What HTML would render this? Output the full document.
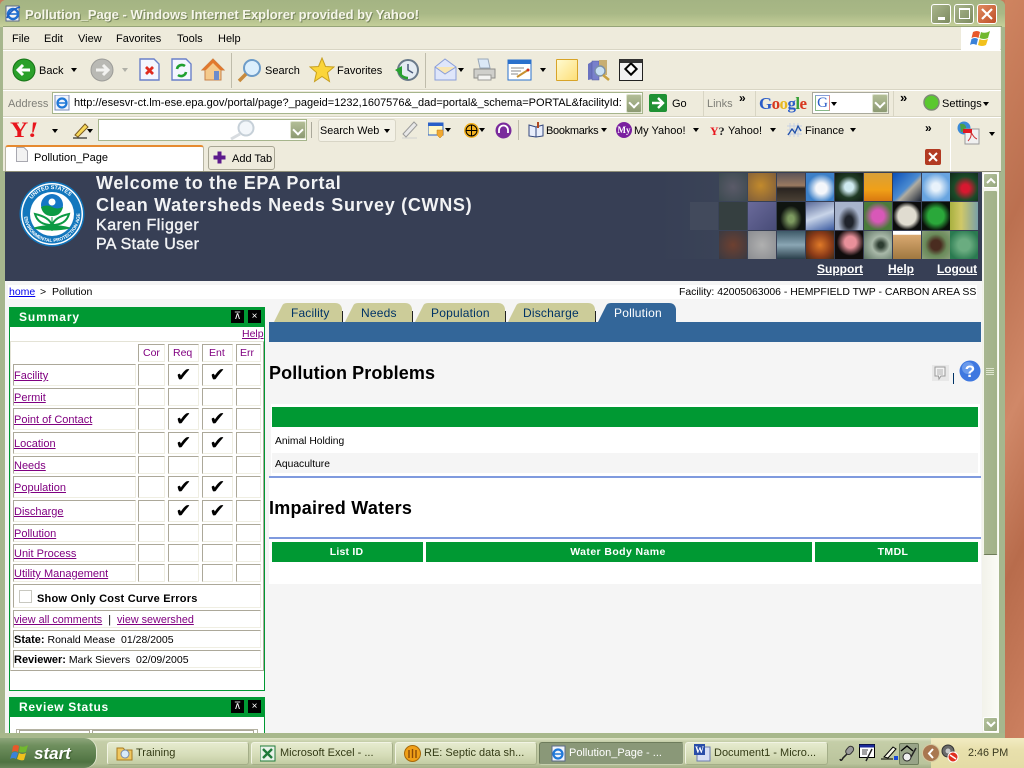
<!DOCTYPE html>
<html lang="en"><head><meta charset="utf-8"><title>Pollution_Page</title>
<style>
*{box-sizing:border-box}
html,body{margin:0;padding:0;width:1024px;height:768px;overflow:hidden;background:#c67c5a;font-family:"Liberation Sans",sans-serif;font-size:11px;color:#000}
div,span.t,svg.a{position:absolute}
.t{position:absolute;white-space:nowrap;line-height:15px;font-size:11px}
.dd{position:absolute;width:0;height:0;border-left:3.5px solid transparent;border-right:3.5px solid transparent;border-top:4px solid #000}
.w{color:#fff}
.lk{color:#800080;text-decoration:underline}
.r{position:absolute;left:13px;width:249px}
.r i{position:absolute;top:0;bottom:0;display:block;font-style:normal;background:#fff;border:1px solid;border-color:#aca899 #efeee2 #efeee2 #aca899;font-size:11px;line-height:19px;padding-left:0;white-space:nowrap;overflow:visible}
.r .a{left:0;width:123px}.r .b{left:125px;width:27px}.r .c{left:155px;width:31px}.r .d{left:189px;width:31px}.r .e{left:223px;width:25px}
.r a{color:#800080;text-decoration:underline}
.r i.ck{font-family:"DejaVu Sans",sans-serif;font-size:19px;line-height:21px;text-align:center;padding:0}
.bx{position:absolute;top:3px;width:13px;height:13px;background:#000;color:#fff;font-size:10px;line-height:13px;text-align:center}
.ph{position:absolute;width:28px;height:28px}
.ddb{position:absolute;background:linear-gradient(#b2bd96,#8d9a73);border:1px solid #dfe4cf;border-radius:2px}
.ddb:after{content:"";position:absolute;left:3px;top:4px;width:6px;height:6px;border:solid #fff;border-width:0 2px 2px 0;transform:rotate(45deg)}
.tb{position:absolute;top:742px;height:23px;background:linear-gradient(#e6ebcf,#d5dcb7 60%,#c3cca3);border:1px solid #f2f4e4;border-right-color:#a4ae88;border-bottom-color:#a4ae88;border-radius:3px;font-size:11px;line-height:21px;color:#333a14;white-space:nowrap}
.tb span{position:absolute;top:0}
.wb{position:absolute;top:4px;width:20px;height:20px;border:1px solid #fff;border-radius:3px}
</style></head><body>

<!-- desktop texture -->
<div style="left:1005px;top:0;width:19px;height:738px;background:linear-gradient(115deg,#cf8460,#bb7050 30%,#d08868 55%,#b86c4c 75%,#cc8060)"></div>

<!-- window frame -->
<div style="left:0;top:0;width:1005px;height:738px;background:#a6b68d;border-radius:6px 6px 0 0"></div>
<div style="left:0;top:0;width:1005px;height:27px;background:linear-gradient(#a4b483,#a9b886 50%,#c6d09a);border-radius:6px 6px 0 0"></div>
<div style="left:3px;top:26px;width:999px;height:1px;background:#95a478"></div>
<svg class="a" style="left:5px;top:5px" width="17" height="17" viewBox="0 0 17 17"><rect x="1" y="1" width="13" height="15" fill="#f4f4f4" stroke="#5a6a88"/><circle cx="8" cy="9" r="5" fill="none" stroke="#1f6fd0" stroke-width="2.4"/><path d="M4 9h8" stroke="#1f6fd0" stroke-width="1.6"/><path d="M2 13C5 6 11 3 15 2" stroke="#1c5cc0" stroke-width="1.6" fill="none"/></svg>
<span class="t" style="left:25px;top:7px;font-size:13px;font-weight:bold;color:#f6f6ea;text-shadow:1px 1px 0 #77855c">Pollution_Page - Windows Internet Explorer provided by Yahoo!</span>
<div class="wb" style="left:931px;background:linear-gradient(135deg,#a9b58c,#7d8b60)"><div style="left:6px;top:12px;width:7px;height:3px;background:#fff"></div></div>
<div class="wb" style="left:954px;background:linear-gradient(135deg,#a9b58c,#7d8b60)"><div style="left:4px;top:3px;width:11px;height:11px;border:1px solid #fff;border-top-width:2px"></div></div>
<div class="wb" style="left:977px;background:linear-gradient(135deg,#e08a60,#bf4f28)"><svg class="a" style="left:3px;top:3px" width="12" height="12"><path d="M1 1 11 11M11 1 1 11" stroke="#fff" stroke-width="2.2"/></svg></div>

<!-- chrome bg -->
<div style="left:3px;top:27px;width:998px;height:144px;background:#eeebdc"></div>
<div style="left:3px;top:49px;width:998px;height:1px;background:#d8d5c4"></div>
<div style="left:3px;top:50px;width:998px;height:1px;background:#fff"></div>
<div style="left:3px;top:89px;width:998px;height:1px;background:#d8d5c4"></div>
<div style="left:3px;top:90px;width:998px;height:1px;background:#fff"></div>
<div style="left:3px;top:116px;width:998px;height:1px;background:#d8d5c4"></div>
<div style="left:3px;top:117px;width:998px;height:1px;background:#fff"></div>

<!-- menu -->
<span class="t" style="left:12px;top:32px">File</span>
<span class="t" style="left:44px;top:32px">Edit</span>
<span class="t" style="left:78px;top:32px">View</span>
<span class="t" style="left:116px;top:32px">Favorites</span>
<span class="t" style="left:177px;top:32px">Tools</span>
<span class="t" style="left:218px;top:32px">Help</span>
<div style="left:961px;top:27px;width:39px;height:23px;background:#fff"></div>
<svg class="a" style="left:970px;top:28px" width="22" height="20" viewBox="0 0 22 20"><path d="M3 4Q7 2 10 4L8.500 10Q5 8 1.500 10Z" fill="#e8582a"/><path d="M11 4Q15 6 20 3L18 10Q14 12 9.500 10Z" fill="#72b82e"/><path d="M1.500 11Q5 9 8 11L6.500 17Q3 15 0 17Z" fill="#3b82d8"/><path d="M9.500 11Q13 13 18 11L16 17Q12 19 8 17Z" fill="#f2c11c"/></svg>

<!-- main toolbar -->
<svg class="a" style="left:12px;top:58px" width="24" height="24"><circle cx="12" cy="12" r="11" fill="#2ba02b" stroke="#157315"/><path d="M6 12h12M11 7l-5 5 5 5" fill="none" stroke="#fff" stroke-width="3"/></svg>
<span class="t" style="left:39px;top:64px">Back</span>
<div class="dd" style="left:71px;top:68px"></div>
<svg class="a" style="left:90px;top:58px" width="24" height="24"><circle cx="12" cy="12" r="11" fill="#b9b9b4" stroke="#9c9c98"/><path d="M6 12h12M13 7l5 5-5 5" fill="none" stroke="#f2f2f0" stroke-width="3"/></svg>
<div class="dd" style="left:122px;top:68px;border-top-color:#b0b0a8"></div>
<svg class="a" style="left:139px;top:58px" width="22" height="24"><path d="M1 1H15L20 6V22H1Z" fill="#f4f6ff" stroke="#6a80c8" stroke-width="1.400"/><path d="M7 9l7 7M14 9l-7 7" stroke="#e02c20" stroke-width="2.800"/></svg>
<svg class="a" style="left:171px;top:58px" width="22" height="24"><path d="M1 1H15L20 6V22H1Z" fill="#f4f6ff" stroke="#6a80c8" stroke-width="1.400"/><path d="M6 11a5 5 0 0 1 8-3M15 14a5 5 0 0 1-8 3" fill="none" stroke="#20a030" stroke-width="2.600"/></svg>
<svg class="a" style="left:201px;top:57px" width="24" height="25"><path d="M12 2 23 13H20V23H4V13H1Z" fill="#f4ca8c" stroke="#c8824a"/><path d="M12 2 23 13H19L12 6 5 13H1Z" fill="#e2782c"/><rect x="13" y="14" width="5" height="9" fill="#6b8ccc"/></svg>
<div style="left:231px;top:53px;width:1px;height:35px;background:#bfbcab"></div>
<svg class="a" style="left:237px;top:58px" width="26" height="25"><circle cx="15" cy="10" r="8" fill="#dceffc" stroke="#6d9cc8" stroke-width="2"/><path d="M9 16 2 23" stroke="#c88a3c" stroke-width="3.500"/></svg>
<span class="t" style="left:265px;top:64px">Search</span>
<svg class="a" style="left:309px;top:57px" width="26" height="26"><path d="M13 1 16.500 9.500 25 10 18.500 15.500 20.500 24.500 13 19.500 5.500 24.500 7.500 15.500 1 10 9.500 9.500Z" fill="#fbd53a" stroke="#c8a020"/></svg>
<span class="t" style="left:337px;top:64px">Favorites</span>
<svg class="a" style="left:394px;top:58px" width="26" height="24"><circle cx="14" cy="12" r="10" fill="#e4ecf2" stroke="#6a7a8a" stroke-width="2"/><path d="M14 6v6l5 3" stroke="#4a5a7a" fill="none" stroke-width="1.500"/><path d="M1 12 8 8V17Z" fill="#28a030"/><path d="M5 13a9 8 0 0 0 9 7" stroke="#28a030" stroke-width="2.500" fill="none"/></svg>
<div style="left:425px;top:53px;width:1px;height:35px;background:#bfbcab"></div>
<svg class="a" style="left:434px;top:58px" width="24" height="24"><path d="M1 9 11 1 22 9V22H1Z" fill="#dfe6fa" stroke="#8a9ed8"/><path d="M1 9 11 16 22 9" fill="#f8e6b4" stroke="#8a9ed8"/></svg>
<div class="dd" style="left:458px;top:68px"></div>
<svg class="a" style="left:472px;top:58px" width="25" height="24"><path d="M6 1h10l2 9H8Z" fill="#dbe8f6" stroke="#9aa8b8"/><path d="M2 11H23V20H2Z" fill="#cfcfcb" stroke="#8e8e8a"/><rect x="6" y="17" width="13" height="5" fill="#f4f4f2" stroke="#9a9a96"/></svg>
<svg class="a" style="left:507px;top:59px" width="26" height="22"><rect x="1" y="1" width="23" height="20" fill="#fff" stroke="#2a70cc"/><rect x="1" y="1" width="23" height="4" fill="#2a70cc"/><path d="M4 9h13M4 12h10M4 15h7" stroke="#8a8a8a"/><path d="M10 18 21 11" stroke="#c89030" stroke-width="2"/><circle cx="21" cy="11" r="1.500" fill="#d03020"/></svg>
<div class="dd" style="left:540px;top:68px"></div>
<div style="left:556px;top:59px;width:22px;height:22px;background:linear-gradient(135deg,#fffad0,#fddf78);border:1px solid #d8a428;border-radius:1px"></div>
<svg class="a" style="left:587px;top:59px" width="24" height="22"><path d="M1 5 6 2V20L1 21Z" fill="#6a72c0"/><rect x="5" y="2" width="7" height="19" fill="#7880cc" stroke="#50589a" stroke-width=".5"/><rect x="12" y="1" width="8" height="15" fill="#c8ae72"/><circle cx="13" cy="12" r="5" fill="#c8e0f4" stroke="#7a90a8" stroke-width="1.400"/><path d="M16 16l6 5" stroke="#c8a040" stroke-width="2.500"/></svg>
<div style="left:619px;top:59px;width:24px;height:22px;background:#f1f1f1;border:1px solid #222;border-top:4px solid #333"></div>
<div style="left:626px;top:64px;width:10px;height:10px;border:2px solid #000;background:#fff;transform:rotate(45deg)"></div>

<!-- address row -->
<span class="t" style="left:8px;top:97px;color:#7f7f78">Address</span>
<div style="left:52px;top:92px;width:591px;height:22px;background:#fff;border:1px solid #a6b58c"></div>
<svg class="a" style="left:54px;top:95px" width="17" height="16"><rect x="1" y="0" width="14" height="15" fill="#f0f4fc" stroke="#7a8cb8"/><circle cx="8" cy="8" r="4.500" fill="none" stroke="#1f78d8" stroke-width="2.200"/><path d="M4 8h8" stroke="#1f78d8" stroke-width="1.500"/></svg>
<div style="left:74px;top:96px;width:552px;height:16px;overflow:hidden"><span class="t" style="left:0;top:0;font-size:11px">http://esesvr-ct.lm-ese.epa.gov/portal/page?_pageid=1232,1607576&amp;_dad=portal&amp;_schema=PORTAL&amp;facilityId:</span></div>
<div class="ddb" style="left:626px;top:94px;width:16px;height:19px"></div>
<svg class="a" style="left:649px;top:94px" width="19" height="18"><rect width="18" height="18" rx="2" fill="#1f9134"/><path d="M3 9h11M9 4l5 5-5 5" stroke="#fff" stroke-width="2.400" fill="none"/></svg>
<span class="t" style="left:672px;top:97px">Go</span>
<div style="left:703px;top:91px;width:1px;height:25px;background:#d8d5c4"></div>
<span class="t" style="left:707px;top:97px;color:#7f7f78">Links</span>
<span class="t" style="left:739px;top:91px;font-weight:bold;font-size:12px">&#187;</span>
<div style="left:755px;top:91px;width:1px;height:25px;background:#d8d5c4"></div>
<span class="t" style="left:759px;top:95px;font-family:'Liberation Serif',serif;font-size:17px;line-height:18px;letter-spacing:-.6px;font-weight:bold;color:#2a5cc8">G<span style="color:#d83820">o</span><span style="color:#e8b820">o</span><span style="color:#2a5cc8">g</span><span style="color:#38a038">l</span><span style="color:#d83820">e</span></span>
<div style="left:812px;top:92px;width:77px;height:22px;background:#fff;border:1px solid #a9a99c"></div>
<div style="left:815px;top:95px;width:15px;height:16px;border:1px solid #88b888;border-right-color:#e08888;border-top-color:#88a0d8;font-family:'Liberation Serif',serif;color:#2a5cc8;font-size:15px;line-height:15px;text-align:center">G</div>
<div class="dd" style="left:831px;top:102px"></div>
<div class="ddb" style="left:872px;top:94px;width:16px;height:19px"></div>
<span class="t" style="left:900px;top:90px;font-weight:bold;font-size:13px">&#187;</span>
<svg class="a" style="left:923px;top:94px" width="17" height="17"><circle cx="8.500" cy="8.500" r="7.500" fill="#5ac82e" stroke="#7d8a74" stroke-width="1.500"/></svg>
<span class="t" style="left:942px;top:97px">Settings</span>
<div class="dd" style="left:983px;top:102px"></div>
<div style="left:893px;top:91px;width:1px;height:25px;background:#d8d5c4"></div>

<!-- yahoo row -->
<span class="t" style="left:10px;top:119px;font-family:'Liberation Serif',serif;font-size:22px;line-height:21px;font-weight:bold;color:#e8141c;transform:scaleX(1.15);transform-origin:left top">Y<i>!</i></span>
<div class="dd" style="left:52px;top:129px"></div>
<svg class="a" style="left:72px;top:121px" width="18" height="18"><path d="M3 14 13 3l3 3L6 16Z" fill="#f8d858" stroke="#7a5a20"/><path d="M1 17h14" stroke="#000"/></svg>
<div class="dd" style="left:87px;top:129px"></div>
<div style="left:98px;top:119px;width:209px;height:22px;background:#fff;border:1px solid #a6b58c"></div>
<svg class="a" style="left:228px;top:120px" width="30" height="20"><circle cx="18" cy="8" r="7.500" fill="#f2f6fa" stroke="#c6d0d8" stroke-width="2"/><path d="M12 14 3 19" stroke="#d8dce0" stroke-width="3"/></svg>
<div class="ddb" style="left:290px;top:121px;width:16px;height:18px"></div>
<div style="left:311px;top:122px;width:1px;height:16px;background:#aaa89a"></div>
<div style="left:318px;top:119px;width:78px;height:23px;background:#f3f1e6;border:1px solid #d8d5c6;border-radius:3px"></div>
<span class="t" style="left:320px;top:124px;font-size:10.800px">Search Web</span>
<div class="dd" style="left:384px;top:129px"></div>
<svg class="a" style="left:401px;top:120px" width="18" height="20"><path d="M2 14 13 2l3 3L5 17Z" fill="#e8e8e8" stroke="#9a9a9a"/><path d="M1 18h15" stroke="#d0d0d0"/></svg>
<svg class="a" style="left:428px;top:122px" width="18" height="18"><rect x="0" y="1" width="15" height="12" fill="#fff8c8" stroke="#2a60c8"/><rect x="0" y="1" width="15" height="3" fill="#2a60c8"/><path d="M9 8h6v5l-3 3-3-3Z" fill="#f0a830" stroke="#b87818" stroke-width=".5"/></svg>
<div class="dd" style="left:445px;top:128px"></div>
<svg class="a" style="left:463px;top:122px" width="17" height="17"><circle cx="8.500" cy="8.500" r="7.500" fill="#f0b020"/><circle cx="8.500" cy="8.500" r="5.500" fill="none" stroke="#000"/><path d="M3 8.500h11M8.500 3v11" stroke="#000"/></svg>
<div class="dd" style="left:479px;top:128px"></div>
<svg class="a" style="left:495px;top:122px" width="17" height="17"><circle cx="8.500" cy="8.500" r="8" fill="#7a2a9c"/><path d="M4 11V8a4.500 4.500 0 0 1 9 0v3" fill="none" stroke="#fff" stroke-width="1.800"/></svg>
<div style="left:518px;top:120px;width:1px;height:20px;background:#bfbcab"></div>
<svg class="a" style="left:528px;top:121px" width="17" height="17"><path d="M1 4 8 6 15 4V15L8 16 1 15Z" fill="#e8eefc" stroke="#32467c"/><path d="M8 6V16" stroke="#32467c"/><path d="M10 1V7" stroke="#b04820" stroke-width="2"/></svg>
<span class="t" style="left:546px;top:124px;letter-spacing:-.3px">Bookmarks</span>
<div class="dd" style="left:601px;top:128px"></div>
<div style="left:616px;top:122px;width:16px;height:16px;border-radius:50%;background:#7a1fa0;color:#fff;font:bold 9px/16px 'Liberation Serif',serif;text-align:center">My</div>
<span class="t" style="left:634px;top:124px">My Yahoo!</span>
<div class="dd" style="left:693px;top:128px"></div>
<span class="t" style="left:710px;top:124px;font-family:'Liberation Serif',serif;font-weight:bold;font-size:12px;color:#e8141c">Y<span style="color:#222">?</span></span>
<span class="t" style="left:728px;top:124px">Yahoo!</span>
<div class="dd" style="left:770px;top:128px"></div>
<svg class="a" style="left:787px;top:123px" width="16" height="15"><path d="M0 3h15M0 7h15M0 11h15M3 0v14M7 0v14M11 0v14" stroke="#b8c8e8" stroke-width=".7"/><path d="M1 12 5 6 8 10 11 3 14 8" fill="none" stroke="#1f4fa8" stroke-width="1.300"/></svg>
<span class="t" style="left:805px;top:124px">Finance</span>
<div class="dd" style="left:850px;top:128px"></div>
<span class="t" style="left:925px;top:121px;font-weight:bold;font-size:12px">&#187;</span>
<div style="left:950px;top:117px;width:1px;height:54px;background:#fff"></div>
<svg class="a" style="left:957px;top:121px" width="24" height="24"><circle cx="7" cy="7" r="6.500" fill="#3a8ad8"/><path d="M3 3Q8 2 9 6T4 11" fill="#48a048"/><rect x="8" y="8" width="14" height="15" fill="#f0f0f0" stroke="#9a9a9a"/><rect x="6" y="8" width="9" height="4" fill="#e01820"/><path d="M11 20Q15 16 14 11 17 17 20 18" fill="none" stroke="#d03030"/></svg>
<div class="dd" style="left:989px;top:132px"></div>

<!-- tab row -->
<div style="left:5px;top:145px;width:199px;height:26px;background:#fff;border:1px solid #b8b6a4;border-bottom:none;border-top:2px solid #e68a30;border-radius:3px 3px 0 0"></div>
<svg class="a" style="left:16px;top:147px" width="12" height="15"><path d="M.5.5H8L11.500 4V14.500H.5Z" fill="#f2f2f2" stroke="#a8a8b0"/></svg>
<span class="t" style="left:34px;top:151px">Pollution_Page</span>
<div style="left:208px;top:146px;width:67px;height:24px;background:#eeebdc;border:1px solid #a8a694;border-radius:3px"></div>
<svg class="a" style="left:213px;top:151px" width="14" height="14"><path d="M5 1h3v4h4v3H8v4H5V8H1V5h4Z" fill="#5c1a8c" stroke="#5c1a8c"/></svg>
<span class="t" style="left:232px;top:152px">Add Tab</span>
<div style="left:925px;top:149px;width:16px;height:16px;background:#b23a22;border-radius:2px"><svg class="a" style="left:3px;top:3px" width="10" height="10"><path d="M1 1 9 9M9 1 1 9" stroke="#fff" stroke-width="2"/></svg></div>

<!-- page area -->
<div style="left:5px;top:171px;width:994px;height:562px;background:#f5f5f5"></div>
<div style="left:5px;top:171px;width:996px;height:1px;background:#8e8e78"></div>
<div style="left:5px;top:172px;width:977px;height:109px;background:#373f55"></div>

<!-- EPA logo -->
<svg class="a" style="left:19px;top:181px" width="66" height="66" viewBox="0 0 66 66">
<defs><path id="cp" d="M8 33a25 25 0 1 1 50 0"/><path id="cb" d="M5 33a28 28 0 0 0 56 0"/></defs>
<circle cx="33" cy="33" r="32.500" fill="#0f72b8"/><circle cx="33" cy="33" r="31" fill="#fff"/><circle cx="33" cy="33" r="29.500" fill="#1377bd"/><circle cx="33" cy="33" r="22" fill="#fff"/>
<text font-size="5.500" font-weight="bold" fill="#fff" font-family="Liberation Sans"><textPath href="#cp" startOffset="20%">UNITED STATES</textPath></text>
<text font-size="4.800" font-weight="bold" fill="#fff" font-family="Liberation Sans"><textPath href="#cb" startOffset="3%">ENVIRONMENTAL PROTECTION AGENCY</textPath></text>
<circle cx="33" cy="24" r="11" fill="#1577c5"/><circle cx="33" cy="21" r="3.500" fill="#fff"/><path d="M22 26Q28 23 33 26T44 26Q42 35 33 35T22 26Z" fill="#0c9a44"/>
<path d="M33 44Q30 36 16 33 19 44 33 44ZM33 44Q36 36 50 33 47 44 33 44Z" fill="#fff" stroke="#0c9a44" stroke-width="2"/><path d="M33 36V50M15 47Q33 42 51 47 33 51 15 47Z" fill="#0c9a44" stroke="#0c9a44"/>
</svg>

<span class="t" style="left:96px;top:173px;font-size:18px;line-height:21px;font-weight:bold;color:#f2f3f5;letter-spacing:.67px">Welcome to the EPA Portal</span>
<span class="t" style="left:96px;top:195px;font-size:18px;line-height:21px;font-weight:bold;color:#f2f3f5;letter-spacing:.69px">Clean Watersheds Needs Survey (CWNS)</span>
<span class="t" style="left:96px;top:216px;font-size:16px;line-height:19px;color:#f2f3f5;letter-spacing:.55px;-webkit-text-stroke:.4px #f2f3f5">Karen Fligger</span>
<span class="t" style="left:96px;top:235px;font-size:16px;line-height:19px;color:#f2f3f5;letter-spacing:.3px;-webkit-text-stroke:.4px #f2f3f5">PA State User</span>

<!-- photo mosaic -->
<div style="left:660px;top:173px;width:88px;height:86px;background:linear-gradient(90deg,#373f55,#3c4558)"></div>
<div class="ph" style="left:690px;top:202px;background:#424a5c"></div>
<div class="ph" style="left:719px;top:173px;background:radial-gradient(circle at 50% 50%,#5a5a68,#3c4a50)"></div>
<div class="ph" style="left:719px;top:202px;background:#353f40"></div>
<div class="ph" style="left:719px;top:231px;background:radial-gradient(circle at 50% 50%,#6e4030,#3a3a42)"></div>
<div class="ph" style="left:748px;top:173px;background:radial-gradient(circle at 45% 45%,#c28a2c,#7a5a3c)"></div>
<div class="ph" style="left:748px;top:202px;background:linear-gradient(135deg,#6a6a9a,#484c78)"></div>
<div class="ph" style="left:748px;top:231px;background:radial-gradient(circle,#b0b0b0,#8a8c90)"></div>
<div class="ph" style="left:777px;top:173px;background:linear-gradient(#5c5458,#9a7a60 45%,#2a2420 55%,#4a4034)"></div>
<div class="ph" style="left:777px;top:202px;background:radial-gradient(ellipse at 50% 60%,#7d9a60 15%,#0f1410 55%)"></div>
<div class="ph" style="left:777px;top:231px;background:linear-gradient(#3e5a68,#8aa6b4 50%,#2a3e4a)"></div>
<div class="ph" style="left:806px;top:173px;background:radial-gradient(ellipse at 55% 55%,#f4f6fa 25%,#3c80c8 65%)"></div>
<div class="ph" style="left:806px;top:202px;background:linear-gradient(160deg,#5a6a98,#c8d4e8 50%,#3a5aa0)"></div>
<div class="ph" style="left:806px;top:231px;background:radial-gradient(circle at 50% 50%,#e07a28,#8a3a18 60%,#3a2a18)"></div>
<div class="ph" style="left:835px;top:173px;background:radial-gradient(circle,#cfeaf0 22%,#1f3a24 55%,#0f1a10)"></div>
<div class="ph" style="left:835px;top:202px;background:radial-gradient(ellipse at 50% 70%,#20242c 20%,#a8b4cc 55%)"></div>
<div class="ph" style="left:835px;top:231px;background:radial-gradient(circle at 55% 40%,#e8909a 25%,#100c0c 60%)"></div>
<div class="ph" style="left:864px;top:173px;background:linear-gradient(#d8a038,#f0a018 60%,#d87810)"></div>
<div class="ph" style="left:864px;top:202px;background:radial-gradient(circle,#d858b8 30%,#4a7a3a 70%)"></div>
<div class="ph" style="left:864px;top:231px;background:radial-gradient(circle at 60% 50%,#2c3c30 12%,#a8b8a8 40%,#5a7060)"></div>
<div class="ph" style="left:893px;top:173px;background:linear-gradient(135deg,#0a50b8,#4a8ad0 50%,#b0aca0 60%,#202838)"></div>
<div class="ph" style="left:893px;top:202px;background:radial-gradient(circle at 50% 50%,#e0dcd0 45%,#0c0c0c 70%)"></div>
<div class="ph" style="left:893px;top:231px;background:linear-gradient(#fff 12%,#d8a870 15%,#a07840 100%)"></div>
<div class="ph" style="left:922px;top:173px;background:radial-gradient(ellipse,#e8f2fb 20%,#68a4e0 70%)"></div>
<div class="ph" style="left:922px;top:202px;background:radial-gradient(circle,#2aa83a 40%,#0a100a 75%)"></div>
<div class="ph" style="left:922px;top:231px;background:radial-gradient(circle,#4a2c20 25%,#6a8a5a 55%,#8aa07a)"></div>
<div class="ph" style="left:950px;top:173px;background:radial-gradient(circle at 55% 55%,#d81830 18%,#1a4a28 55%,#102818)"></div>
<div class="ph" style="left:950px;top:202px;background:linear-gradient(90deg,#a8b040,#d0c868 40%,#7aa0a8)"></div>
<div class="ph" style="left:950px;top:231px;background:radial-gradient(circle,#6aac80 30%,#2a7a50 80%)"></div>

<span class="t" style="left:817px;top:262px;font-size:12px;font-weight:bold;color:#fff;text-decoration:underline">Support</span>
<span class="t" style="left:888px;top:262px;font-size:12px;font-weight:bold;color:#fff;text-decoration:underline">Help</span>
<span class="t" style="left:937px;top:262px;font-size:12px;font-weight:bold;color:#fff;text-decoration:underline;letter-spacing:-.1px">Logout</span>

<!-- breadcrumb -->
<div style="left:8px;top:285px;width:969px;height:14px;background:#fff"></div>
<span class="t" style="left:9px;top:285px;font-size:10.500px;color:#0000ee;text-decoration:underline">home</span>
<span class="t" style="left:40px;top:285px;font-size:10.500px">&gt;</span>
<span class="t" style="left:52px;top:285px;font-size:10.500px">Pollution</span>
<span class="t" style="left:679px;top:285px;font-size:10.430px">Facility: 42005063006 - HEMPFIELD TWP - CARBON AREA SS</span>

<!-- summary panel -->
<div style="left:9px;top:307px;width:256px;height:384px;background:#fff;border:1px solid #009933"></div>
<div style="left:9px;top:307px;width:256px;height:20px;background:#009933"></div>
<span class="t" style="left:19px;top:310px;font-size:12px;line-height:14px;font-weight:bold;color:#fff;letter-spacing:.9px">Summary</span>
<div class="bx" style="left:231px;top:310px;height:13px">&#8892;</div>
<div class="bx" style="left:248px;top:310px;height:13px">&#215;</div>
<span class="t" style="left:242px;top:327px;font-size:10.500px;color:#800080;text-decoration:underline">Help</span>
<div style="left:10px;top:341px;width:254px;height:330px;border:1px solid;border-color:#e4e3d6 #aca899 #aca899 #e4e3d6"></div>

<div class="r" style="top:344px;height:18px"><i class="b" style="color:#800080;font-size:10.500px;padding-left:4px;line-height:17px">Cor</i><i class="c" style="color:#800080;font-size:10.500px;padding-left:4px;line-height:17px">Req</i><i class="d" style="color:#800080;font-size:10.500px;padding-left:6px;line-height:17px">Ent</i><i class="e" style="color:#800080;font-size:10.500px;padding-left:3px;line-height:17px">Err</i></div>
<div class="r" style="top:364px;height:22px"><i class="a" style="line-height:23px"><a>Facility</a></i><i class="b"></i><i class="c ck">&#10004;</i><i class="d ck">&#10004;</i><i class="e"></i></div>
<div class="r" style="top:388px;height:18px"><i class="a"><a>Permit</a></i><i class="b"></i><i class="c"></i><i class="d"></i><i class="e"></i></div>
<div class="r" style="top:408px;height:22px"><i class="a" style="line-height:23px"><a>Point of Contact</a></i><i class="b"></i><i class="c ck">&#10004;</i><i class="d ck">&#10004;</i><i class="e"></i></div>
<div class="r" style="top:432px;height:22px"><i class="a" style="line-height:23px"><a>Location</a></i><i class="b"></i><i class="c ck">&#10004;</i><i class="d ck">&#10004;</i><i class="e"></i></div>
<div class="r" style="top:456px;height:18px"><i class="a"><a>Needs</a></i><i class="b"></i><i class="c"></i><i class="d"></i><i class="e"></i></div>
<div class="r" style="top:476px;height:22px"><i class="a" style="line-height:23px"><a>Population</a></i><i class="b"></i><i class="c ck">&#10004;</i><i class="d ck">&#10004;</i><i class="e"></i></div>
<div class="r" style="top:500px;height:22px"><i class="a" style="line-height:23px"><a>Discharge</a></i><i class="b"></i><i class="c ck">&#10004;</i><i class="d ck">&#10004;</i><i class="e"></i></div>
<div class="r" style="top:524px;height:18px"><i class="a"><a>Pollution</a></i><i class="b"></i><i class="c"></i><i class="d"></i><i class="e"></i></div>
<div class="r" style="top:544px;height:18px"><i class="a"><a>Unit Process</a></i><i class="b"></i><i class="c"></i><i class="d"></i><i class="e"></i></div>
<div class="r" style="top:564px;height:18px"><i class="a"><a>Utility Management</a></i><i class="b"></i><i class="c"></i><i class="d"></i><i class="e"></i></div>

<div class="r" style="top:584px;height:24px"><i style="left:0;width:248px"></i></div>
<div style="left:19px;top:590px;width:13px;height:13px;background:#fff;border:1px solid #c8c8c0"></div>
<span class="t" style="left:37px;top:592px;font-weight:bold;letter-spacing:.22px">Show Only Cost Curve Errors</span>
<div class="r" style="top:610px;height:18px"><i style="left:0;width:248px;line-height:19px;font-size:10.800px"><a>view all comments</a> &nbsp;|&nbsp; <a>view sewershed</a></i></div>
<div class="r" style="top:630px;height:18px"><i style="left:0;width:248px;line-height:19px;font-size:10.500px"><b style="font-size:11px">State:</b> Ronald Mease &nbsp;01/28/2005</i></div>
<div class="r" style="top:650px;height:18px"><i style="left:0;width:248px;line-height:19px;font-size:10.500px"><b style="font-size:11px">Reviewer:</b> Mark Sievers &nbsp;02/09/2005</i></div>

<!-- review status -->
<div style="left:9px;top:697px;width:256px;height:36px;background:#fff;border:1px solid #009933;border-bottom:none"></div>
<div style="left:9px;top:697px;width:256px;height:20px;background:#009933"></div>
<span class="t" style="left:19px;top:700px;font-size:12px;line-height:14px;font-weight:bold;color:#fff;letter-spacing:.65px">Review Status</span>
<div class="bx" style="left:231px;top:700px">&#8892;</div>
<div class="bx" style="left:248px;top:700px">&#215;</div>
<div style="left:16px;top:729px;width:242px;height:4px;border:1px solid #b4b2a2;border-bottom:none"></div>
<div style="left:19px;top:730px;width:71px;height:3px;border:1px solid #aca899;border-bottom:none"></div>
<div style="left:92px;top:730px;width:162px;height:3px;border:1px solid #aca899;border-bottom:none"></div>

<!-- right content -->
<svg class="a" style="left:271px;top:303px" width="410" height="20" viewBox="0 0 410 20">
<g fill="#cccc99"><path d="M3 19 11 3Q12 0 16 0H64Q70 0 71 6V19Z"/><path d="M74 19 82 3Q83 0 87 0H134Q140 0 141 6V19Z"/><path d="M144 19 152 3Q153 0 157 0H227Q233 0 234 6V19Z"/><path d="M237 19 245 3Q246 0 250 0H317Q323 0 324 6V19Z"/></g>
<path d="M327 19 335 3Q336 0 340 0H398Q404 0 405 6V19Z" fill="#336699"/>
<g stroke="#222" fill="none"><path d="M71.500 8V19M141.500 8V19M234.500 8V19M324.500 8V19"/></g>
</svg>
<span class="t" style="left:291px;top:306px;font-size:12px;color:#003366;letter-spacing:.15px">Facility</span>
<span class="t" style="left:361px;top:306px;font-size:12px;color:#003366;letter-spacing:.2px">Needs</span>
<span class="t" style="left:431px;top:306px;font-size:12px;color:#003366;letter-spacing:.2px">Population</span>
<span class="t" style="left:523px;top:306px;font-size:12px;color:#003366;letter-spacing:.2px">Discharge</span>
<span class="t" style="left:614px;top:306px;font-size:12px;color:#fff;letter-spacing:.2px">Pollution</span>
<div style="left:269px;top:322px;width:712px;height:20px;background:#336699"></div>

<span class="t" style="left:269px;top:363px;font-size:18px;line-height:20px;font-weight:bold;letter-spacing:.12px">Pollution Problems</span>
<svg class="a" style="left:932px;top:365px" width="18" height="18"><rect width="17" height="16" fill="#e8e8e8"/><path d="M3 2H13V11H9L7 14 6.500 11H3Z" fill="#f4f4f4" stroke="#9a9a9a"/><path d="M5 5h6M5 7h6M5 9h6" stroke="#9a9a9a" stroke-width=".7"/></svg>
<div style="left:953px;top:373px;width:1px;height:11px;background:#003366"></div>
<svg class="a" style="left:959px;top:360px" width="22" height="22"><circle cx="11" cy="11" r="10.500" fill="#3f78e0"/><circle cx="9" cy="8" r="6" fill="#7ea8f0" opacity=".7"/><text x="11" y="17" text-anchor="middle" font-size="17" font-weight="bold" fill="#fff" font-family="Liberation Sans">?</text></svg>

<div style="left:271px;top:404px;width:709px;height:72px;background:#fff"></div>
<div style="left:272px;top:407px;width:706px;height:20px;background:#009933"></div>
<span class="t" style="left:275px;top:434px;font-size:10.300px">Animal Holding</span>
<div style="left:272px;top:453px;width:706px;height:20px;background:#f5f5f5"></div>
<span class="t" style="left:275px;top:457px;font-size:10.300px">Aquaculture</span>
<div style="left:269px;top:476px;width:712px;height:108px;background:#fff"></div>
<div style="left:269px;top:476px;width:712px;height:2px;background:#7f9ade"></div>
<span class="t" style="left:269px;top:498px;font-size:18px;line-height:20px;font-weight:bold;letter-spacing:.25px">Impaired Waters</span>
<div style="left:269px;top:537px;width:712px;height:2px;background:#7f9ade"></div>
<div style="left:272px;top:542px;width:151px;height:20px;background:#009933;color:#fff;font-weight:bold;font-size:10.500px;line-height:20px;text-align:center;padding-right:2px;letter-spacing:.2px">List ID</div>
<div style="left:426px;top:542px;width:386px;height:20px;background:#009933;color:#fff;font-weight:bold;font-size:10.500px;line-height:20px;text-align:center;padding-right:2px;letter-spacing:.4px">Water Body Name</div>
<div style="left:815px;top:542px;width:163px;height:20px;background:#009933;color:#fff;font-weight:bold;font-size:10.500px;line-height:20px;text-align:center;padding-right:7px;letter-spacing:.4px">TMDL</div>

<!-- scrollbar -->
<div style="left:982px;top:172px;width:17px;height:561px;background:linear-gradient(90deg,#f2f2ea,#fbfbf6)"></div>
<div style="left:983px;top:173px;width:15px;height:15px;background:linear-gradient(135deg,#b4c29c,#96a67e);border:1px solid #fff;border-radius:2px"><svg class="a" style="left:2px;top:3px" width="10" height="7"><path d="M1 6 5 2 9 6" fill="none" stroke="#fff" stroke-width="2"/></svg></div>
<div style="left:983px;top:190px;width:15px;height:365px;background:linear-gradient(90deg,#a8b691,#a2b288);border:1px solid #f4f6ec;border-bottom-color:#6e7c58;border-radius:2px"></div>
<div style="left:986px;top:368px;width:8px;height:1px;background:#dfe6cf;box-shadow:0 2px 0 #dfe6cf,0 4px 0 #dfe6cf,0 6px 0 #dfe6cf"></div>
<div style="left:983px;top:717px;width:15px;height:15px;background:linear-gradient(135deg,#b4c29c,#96a67e);border:1px solid #fff;border-radius:2px"><svg class="a" style="left:2px;top:3px" width="10" height="7"><path d="M1 1 5 5 9 1" fill="none" stroke="#fff" stroke-width="2"/></svg></div>

<!-- taskbar -->
<div style="left:0;top:733px;width:1005px;height:5px;background:#a8b88c"></div>
<div style="left:0;top:738px;width:1024px;height:30px;background:linear-gradient(#dfe5c8,#c5cea8 12%,#bac49c 85%,#a5b088)"></div>
<div style="left:0;top:738px;width:96px;height:30px;background:linear-gradient(#8ea67c,#6f8f5e 25%,#4f7342 80%,#69875a);border-radius:0 12px 12px 0;box-shadow:1px 0 0 #e4e9d2"></div>
<svg class="a" style="left:10px;top:743px" width="20" height="20" viewBox="0 0 20 20"><path d="M3 3Q6 1 9 3L8 9Q5 7 2 9Z" fill="#e8582a"/><path d="M10 3Q13 5 18 2L16 9Q13 10 9 9Z" fill="#72b82e"/><path d="M2 10Q5 8 8 10L6 16Q3 14 0 16Z" fill="#3b82d8"/><path d="M9 10Q12 12 16 10L14 17Q11 18 7 16Z" fill="#f2c11c"/></svg>
<span class="t" style="left:34px;top:744px;font-size:17px;line-height:19px;font-style:italic;font-weight:bold;color:#fff;text-shadow:1px 1px 1px #3a5a2a">start</span>

<div class="tb" style="left:107px;width:142px"><svg class="a" style="left:8px;top:2px" width="17" height="17"><path d="M1 3h6l2 2h7v10H1Z" fill="#f0c860" stroke="#a87a20"/><circle cx="9" cy="9" r="4" fill="#d8eaf8" stroke="#7a8aa8"/></svg><span style="left:28px">Training</span></div>
<div class="tb" style="left:251px;width:142px"><svg class="a" style="left:8px;top:2px" width="16" height="17"><rect x="0" y="1" width="15" height="15" fill="#e8f2e8" stroke="#1f7a3a"/><path d="M3 4 12 13M12 4 3 13" stroke="#1f7a3a" stroke-width="2.400"/></svg><span style="left:28px">Microsoft Excel - ...</span></div>
<div class="tb" style="left:395px;width:142px"><svg class="a" style="left:8px;top:2px" width="17" height="17"><circle cx="8.500" cy="8.500" r="8" fill="#f0a018" stroke="#a86808"/><path d="M5 5v8M8.500 4v9M12 5v8" stroke="#8a4a08" stroke-width="1.400"/></svg><span style="left:28px">RE: Septic data sh...</span></div>
<div class="tb" style="left:539px;width:145px;background:#8a9878;border-color:#6e7c5c #c8d0b0 #c8d0b0 #6e7c5c;color:#fff"><svg class="a" style="left:10px;top:2px" width="17" height="17"><rect x="2" y="1" width="13" height="15" fill="#f0f4fc" stroke="#5a6a88"/><circle cx="8" cy="9" r="4.500" fill="none" stroke="#1f78d8" stroke-width="2.200"/><path d="M4 9h8" stroke="#1f78d8" stroke-width="1.500"/></svg><span style="left:29px">Pollution_Page - ...</span></div>
<div class="tb" style="left:685px;width:143px"><svg class="a" style="left:8px;top:1px" width="17" height="18"><rect x="3" y="3" width="13" height="14" fill="#d8e0f4" stroke="#6a7ab0"/><rect x="0" y="0" width="11" height="11" fill="#2a4ea8"/><text x="5.500" y="9" font-size="9" font-weight="bold" fill="#fff" text-anchor="middle" font-family="Liberation Serif">W</text></svg><span style="left:28px">Document1 - Micro...</span></div>

<svg class="a" style="left:838px;top:744px" width="18" height="19"><path d="M11 8 5 14Q3 18 2 15" fill="none" stroke="#222" stroke-width="1.500"/><rect x="9" y="2" width="6" height="9" rx="3" transform="rotate(40 12 6)" fill="#9a9a9a" stroke="#333"/></svg>
<svg class="a" style="left:859px;top:744px" width="17" height="18"><rect x=".5" y=".5" width="15" height="13" fill="#fff" stroke="#000"/><rect x=".5" y=".5" width="15" height="3" fill="#1a2a9a"/><path d="M3 6h6M3 8h5M3 10h5" stroke="#444"/><path d="M13 5 7 17" stroke="#222" stroke-width="1.500"/></svg>
<svg class="a" style="left:881px;top:745px" width="18" height="16"><path d="M3 12 12 2l3 2L7 13Z" fill="#f8f8e8" stroke="#000"/><path d="M0 14h12" stroke="#000"/><rect x="13" y="11" width="4" height="4" fill="#1a4ad8"/></svg>
<div style="left:899px;top:743px;width:20px;height:22px;background:#98a488;border:1px solid #6e7c5c;border-radius:2px"></div>
<svg class="a" style="left:900px;top:745px" width="18" height="18"><path d="M1 6 7 1 13 6" fill="none" stroke="#000" stroke-width="1.300"/><circle cx="7" cy="12" r="4" fill="#eee" stroke="#222"/><path d="M11 12 16 3" stroke="#222" stroke-width="1.500"/></svg>
<div style="left:931px;top:738px;width:93px;height:30px;background:linear-gradient(#f2ecc2,#e8e0ac 40%,#e4dca6)"></div>
<div style="left:922px;top:744px;width:18px;height:18px;border-radius:50%;background:#a97750;border:1px solid #d4c8a0"><svg class="a" style="left:4px;top:3px" width="9" height="11"><path d="M6 1 2 5.500 6 10" fill="none" stroke="#fff" stroke-width="2"/></svg></div>
<svg class="a" style="left:941px;top:744px" width="18" height="19"><circle cx="7" cy="7" r="6" fill="#6a6a6a" stroke="#333"/><circle cx="7" cy="7" r="2.500" fill="#c8c8c8"/><circle cx="12" cy="13" r="5" fill="#e03020" stroke="#fff"/><path d="M9 11 15 15" stroke="#fff" stroke-width="1.500"/></svg>
<span class="t" style="left:968px;top:746px;color:#3a3a20;font-size:10.800px">2:46 PM</span>
</body></html>
